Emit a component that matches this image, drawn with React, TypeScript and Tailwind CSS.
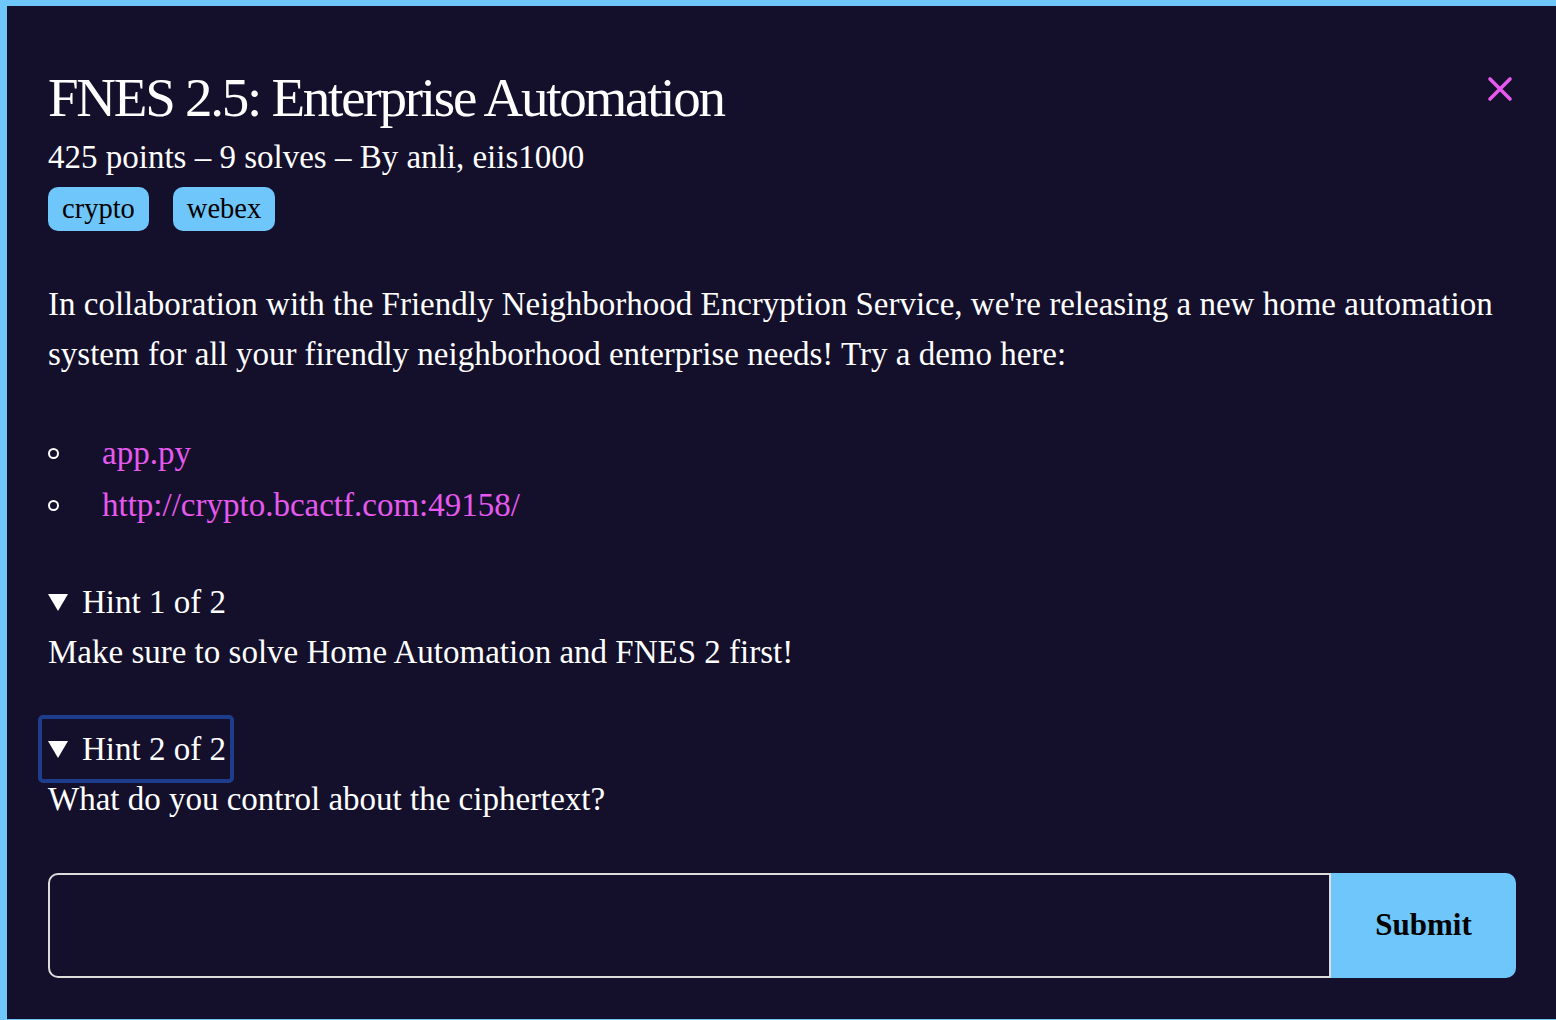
const serif = { fontFamily: '"Liberation Serif", "Times New Roman", serif' }

function Triangle() {
  return (
    <svg width="20" height="17" viewBox="0 0 20 17" className="shrink-0">
      <path d="M0 0 H20 L10 17 Z" fill="white" />
    </svg>
  )
}

function Bullet() {
  return <span className="inline-block w-[11px] h-[11px] rounded-full border-2 border-white shrink-0" />
}

function CloseIcon() {
  return (
    <svg width="26" height="26" viewBox="0 0 26 26" className="shrink-0 mt-[8px] mr-[3px]">
      <path d="M3 3 L23 23 M23 3 L3 23" stroke="#e659ef" strokeWidth="3.6" strokeLinecap="round" />
    </svg>
  )
}

export default function App() {
  return (
    <div
      className="w-[1556px] h-[1020px] overflow-hidden bg-[#14102b] border-t-[6px] border-l-[7px] border-b border-[#6ec6fa] text-white"
      style={serif}
    >
      <div className="pl-[41px] pr-[40px] pt-[62px]">
        {/* Header */}
        <div className="flex items-start justify-between">
          <h1 className="text-[55px] leading-[60px] tracking-[-2.25px] text-white">FNES 2.5: Enterprise Automation</h1>
          <CloseIcon />
        </div>
        <p className="text-[33px] leading-[40px] mt-[9px]">425 points – 9 solves – By anli, eiis1000</p>
        <div className="flex gap-[24px] mt-[10px]">
          <span className="bg-[#6ec6fa] text-black text-[28.5px] leading-[44px] h-[44px] px-[14px] rounded-[10px]">crypto</span>
          <span className="bg-[#6ec6fa] text-black text-[28.5px] leading-[44px] h-[44px] px-[14px] rounded-[10px]">webex</span>
        </div>

        {/* Description */}
        <p className="text-[33px] leading-[50px] mt-[48px]">
          In collaboration with the Friendly Neighborhood Encryption Service, we're releasing a new home automation
          system for all your firendly neighborhood enterprise needs! Try a demo here:
        </p>
        <ul className="mt-[48px] text-[33px] leading-[52px]">
          <li className="flex items-center">
            <Bullet />
            <span className="ml-[43px] text-[#e659ef]">app.py</span>
          </li>
          <li className="flex items-center">
            <Bullet />
            <span className="ml-[43px] text-[#e659ef]">http://crypto.bcactf.com:49158/</span>
          </li>
        </ul>

        {/* Hints */}
        <div className="mt-[46px] text-[33px] leading-[50px]">
          <div className="flex items-center gap-[14px]">
            <Triangle />
            <span>Hint 1 of 2</span>
          </div>
          <p>Make sure to solve Home Automation and FNES 2 first!</p>
        </div>
        <div className="mt-[38px] text-[33px] leading-[50px]">
          <div className="inline-flex items-center gap-[14px] ml-[-10px] pl-[6px] pr-[4px] h-[68px] border-4 border-[#1d3d8c] rounded-[5px]">
            <Triangle />
            <span>Hint 2 of 2</span>
          </div>
          <p className="-mt-[9px]">What do you control about the ciphertext?</p>
        </div>

        {/* Flag form */}
        <div className="flex mt-[49px] h-[105px]">
          <input
            type="text"
            className="flex-1 bg-transparent border-2 border-[#dcdcdc] rounded-l-[10px] outline-none px-4 text-[28px]"
          />
          <button className="w-[185px] bg-[#6ec6fa] text-black font-bold text-[31px] rounded-r-[10px]" style={serif}>
            Submit
          </button>
        </div>
      </div>
    </div>
  )
}
